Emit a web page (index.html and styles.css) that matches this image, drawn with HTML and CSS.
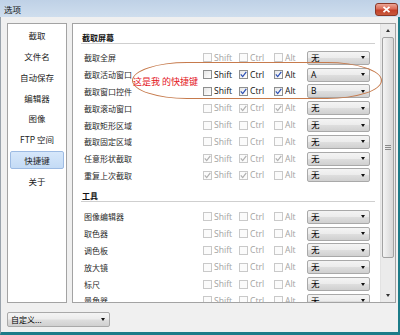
FILE: index.html
```
<!DOCTYPE html>
<html lang="zh-CN">
<head>
<meta charset="utf-8">
<title>选项</title>
<link rel="stylesheet" href="styles.css">
</head>
<body>
<div class="window">
  <div class="titlebar">
    <span class="title">选项</span>
    <div class="close"><svg width="9" height="7" viewBox="0 0 9 7"><path d="M1.5 0.8 L7.5 6.2 M7.5 0.8 L1.5 6.2" stroke="#fff" stroke-width="1.8" fill="none"/></svg></div>
  </div>
  <div class="body">
    <div class="main">
      <nav class="nav">
        <div class="nav-item">截取</div>
        <div class="nav-item">文件名</div>
        <div class="nav-item">自动保存</div>
        <div class="nav-item">编辑器</div>
        <div class="nav-item">图像</div>
        <div class="nav-item">FTP 空间</div>
        <div class="nav-item active">快捷键</div>
        <div class="nav-item">关于</div>
      </nav>
      <div class="content">
        <div class="scroll-area">
          <div class="section-title">截取屏幕</div>
          <div class="rows">
            <div class="row">
              <span class="label">截取全屏</span>
              <span class="key shift off"><i class="box"></i>Shift</span>
              <span class="key ctrl off"><i class="box"></i>Ctrl</span>
              <span class="key alt off"><i class="box"></i>Alt</span>
              <span class="select"><span class="val">无</span><i class="arrow"></i></span>
            </div>
            <div class="row">
              <span class="label">截取活动窗口</span>
              <span class="key shift"><i class="box"></i>Shift</span>
              <span class="key ctrl"><i class="box"><svg viewBox="0 0 9 9"><path d="M1.8 4.4 L3.7 6.6 L7.3 1.9"/></svg></i>Ctrl</span>
              <span class="key alt"><i class="box"><svg viewBox="0 0 9 9"><path d="M1.8 4.4 L3.7 6.6 L7.3 1.9"/></svg></i>Alt</span>
              <span class="select"><span class="val">A</span><i class="arrow"></i></span>
            </div>
            <div class="row">
              <span class="label">截取窗口控件</span>
              <span class="key shift"><i class="box"></i>Shift</span>
              <span class="key ctrl"><i class="box"><svg viewBox="0 0 9 9"><path d="M1.8 4.4 L3.7 6.6 L7.3 1.9"/></svg></i>Ctrl</span>
              <span class="key alt"><i class="box"><svg viewBox="0 0 9 9"><path d="M1.8 4.4 L3.7 6.6 L7.3 1.9"/></svg></i>Alt</span>
              <span class="select"><span class="val">B</span><i class="arrow"></i></span>
            </div>
            <div class="row">
              <span class="label">截取滚动窗口</span>
              <span class="key shift off"><i class="box"></i>Shift</span>
              <span class="key ctrl off"><i class="box"><svg viewBox="0 0 9 9"><path d="M1.8 4.4 L3.7 6.6 L7.3 1.9"/></svg></i>Ctrl</span>
              <span class="key alt off"><i class="box"><svg viewBox="0 0 9 9"><path d="M1.8 4.4 L3.7 6.6 L7.3 1.9"/></svg></i>Alt</span>
              <span class="select"><span class="val">无</span><i class="arrow"></i></span>
            </div>
            <div class="row">
              <span class="label">截取矩形区域</span>
              <span class="key shift off"><i class="box"></i>Shift</span>
              <span class="key ctrl off"><i class="box"></i>Ctrl</span>
              <span class="key alt off"><i class="box"></i>Alt</span>
              <span class="select"><span class="val">无</span><i class="arrow"></i></span>
            </div>
            <div class="row">
              <span class="label">截取固定区域</span>
              <span class="key shift off"><i class="box"></i>Shift</span>
              <span class="key ctrl off"><i class="box"></i>Ctrl</span>
              <span class="key alt off"><i class="box"></i>Alt</span>
              <span class="select"><span class="val">无</span><i class="arrow"></i></span>
            </div>
            <div class="row">
              <span class="label">任意形状截取</span>
              <span class="key shift off"><i class="box"><svg viewBox="0 0 9 9"><path d="M1.8 4.4 L3.7 6.6 L7.3 1.9"/></svg></i>Shift</span>
              <span class="key ctrl off"><i class="box"><svg viewBox="0 0 9 9"><path d="M1.8 4.4 L3.7 6.6 L7.3 1.9"/></svg></i>Ctrl</span>
              <span class="key alt off"><i class="box"><svg viewBox="0 0 9 9"><path d="M1.8 4.4 L3.7 6.6 L7.3 1.9"/></svg></i>Alt</span>
              <span class="select"><span class="val">无</span><i class="arrow"></i></span>
            </div>
            <div class="row">
              <span class="label">重复上次截取</span>
              <span class="key shift off"><i class="box"><svg viewBox="0 0 9 9"><path d="M1.8 4.4 L3.7 6.6 L7.3 1.9"/></svg></i>Shift</span>
              <span class="key ctrl off"><i class="box"><svg viewBox="0 0 9 9"><path d="M1.8 4.4 L3.7 6.6 L7.3 1.9"/></svg></i>Ctrl</span>
              <span class="key alt off"><i class="box"></i>Alt</span>
              <span class="select"><span class="val">无</span><i class="arrow"></i></span>
            </div>
          </div>
          <div class="section-title second">工具</div>
          <div class="rows tools">
            <div class="row">
              <span class="label">图像编辑器</span>
              <span class="key shift off"><i class="box"></i>Shift</span>
              <span class="key ctrl off"><i class="box"></i>Ctrl</span>
              <span class="key alt off"><i class="box"></i>Alt</span>
              <span class="select"><span class="val">无</span><i class="arrow"></i></span>
            </div>
            <div class="row">
              <span class="label">取色器</span>
              <span class="key shift off"><i class="box"></i>Shift</span>
              <span class="key ctrl off"><i class="box"></i>Ctrl</span>
              <span class="key alt off"><i class="box"></i>Alt</span>
              <span class="select"><span class="val">无</span><i class="arrow"></i></span>
            </div>
            <div class="row">
              <span class="label">调色板</span>
              <span class="key shift off"><i class="box"></i>Shift</span>
              <span class="key ctrl off"><i class="box"></i>Ctrl</span>
              <span class="key alt off"><i class="box"></i>Alt</span>
              <span class="select"><span class="val">无</span><i class="arrow"></i></span>
            </div>
            <div class="row">
              <span class="label">放大镜</span>
              <span class="key shift off"><i class="box"></i>Shift</span>
              <span class="key ctrl off"><i class="box"></i>Ctrl</span>
              <span class="key alt off"><i class="box"></i>Alt</span>
              <span class="select"><span class="val">无</span><i class="arrow"></i></span>
            </div>
            <div class="row">
              <span class="label">标尺</span>
              <span class="key shift off"><i class="box"></i>Shift</span>
              <span class="key ctrl off"><i class="box"></i>Ctrl</span>
              <span class="key alt off"><i class="box"></i>Alt</span>
              <span class="select"><span class="val">无</span><i class="arrow"></i></span>
            </div>
            <div class="row">
              <span class="label">量角器</span>
              <span class="key shift off"><i class="box"></i>Shift</span>
              <span class="key ctrl off"><i class="box"></i>Ctrl</span>
              <span class="key alt off"><i class="box"></i>Alt</span>
              <span class="select"><span class="val">无</span><i class="arrow"></i></span>
            </div>
          </div>
        </div>
        <div class="scrollbar">
          <div class="sb-btn"><i class="sb-up"></i></div>
          <div class="sb-thumb"><i class="grip"></i><i class="grip"></i><i class="grip"></i></div>
          <div class="sb-track"></div>
          <div class="sb-btn"><i class="sb-down"></i></div>
        </div>
      </div>
    </div>
    <div class="footer">
      <div class="select footer-select"><span class="val">自定义...</span><i class="arrow"></i></div>
    </div>
  </div>
  <div class="annotation">
    <div class="ellipse"></div>
    <span class="note">这是我 的快捷键</span>
  </div>
</div>
</body>
</html>
```

FILE: styles.css
```
* { box-sizing: border-box; }
html, body {
  margin: 0;
  padding: 0;
  width: 400px;
  height: 335px;
  overflow: hidden;
  background: #f0f0f0;
}
.window {
  position: relative;
  width: 400px;
  height: 335px;
  font-family: "Open Sans", "Noto Sans CJK SC", sans-serif;
  font-size: 8px;
  color: #222;
  background: #f0f0f0;
}
.titlebar {
  position: relative;
  height: 17px;
  background: linear-gradient(#bfd1e6, #cfdeee);
  display: flex;
  align-items: center;
  padding-left: 4px;
}
.title {
  font-family: "Noto Sans CJK SC", sans-serif;
  font-size: 8.5px;
  color: #111;
  line-height: 12px;
}
.close {
  position: absolute;
  left: 375px;
  top: 3px;
  width: 23px;
  height: 13px;
  border: 1px solid #8a3727;
  border-radius: 3px;
  background: linear-gradient(#eba596 0%, #db6a55 45%, #c4412b 55%, #c85a3d 100%);
  display: flex;
  align-items: center;
  justify-content: center;
}
.close svg { display: block; }

.body {
  height: 318px;
  border-left: 1px solid #9aa3ac;
  border-right: 2px solid #1d7b88;
  border-bottom: 3px solid #1d7b88;
  display: flex;
  flex-direction: column;
}
.main {
  height: 286px;
  padding: 6px 2px 0 6px;
  display: flex;
  gap: 5px;
}
.nav {
  width: 60px;
  height: 280px;
  background: #fff;
  border: 1px solid #a3a3a3;
  padding: 2px 2px 0;
}
.nav-item {
  height: 18px;
  margin-bottom: 2.86px;
  display: flex;
  align-items: center;
  justify-content: center;
  font-family: "Noto Sans CJK SC", sans-serif;
  font-size: 8.5px;
  color: #222;
  border: 1px solid transparent;
  border-radius: 2px;
}
.nav-item.active {
  background: linear-gradient(#d6e7fa, #c4dbf5);
  border-color: #9dbbe3;
}
.content {
  width: 324px;
  height: 280px;
  background: #fff;
  border: 1px solid #a3a3a3;
  display: flex;
}
.scroll-area {
  width: 307px;
  height: 278px;
  overflow: hidden;
  padding-left: 8px;
}
.section-title {
  margin-top: 8px;
  margin-right: 5px;
  height: 12px;
  line-height: 11px;
  border-bottom: 1px solid #cfcfcf;
  font-family: "Noto Sans CJK SC", sans-serif;
  font-weight: 700;
  font-size: 8px;
  color: #111;
  padding-left: 1px;
}
.section-title.second { margin-top: 6.6px; }
.rows { padding: 5.5px 0 0 3px; }
.rows.tools { padding-top: 6px; }
.row {
  height: 16.8px;
  display: flex;
  align-items: center;
}
.label {
  width: 119px;
  font-family: "Noto Sans CJK SC", sans-serif;
  font-size: 8px;
  color: #2a2a2a;
  white-space: nowrap;
}
.key {
  display: flex;
  align-items: center;
  font-size: 8.6px;
  color: #111;
  line-height: 10px;
}
.key.shift { width: 36px; }
.key.ctrl { width: 35px; }
.key.alt { width: 33px; }
.key.off { color: #a2a2a2; }
.box {
  width: 9px;
  height: 9px;
  margin-right: 2px;
  border: 1px solid #8e8f8f;
  background: linear-gradient(135deg, #e6e6e6, #ffffff);
  display: block;
  position: relative;
  flex: none;
}
.key.off .box {
  border-color: #c9c9c9;
  background: #fbfbfb;
}
.box svg {
  position: absolute;
  left: -1px;
  top: -1px;
  width: 9px;
  height: 9px;
}
.box svg path {
  fill: none;
  stroke: #2b4fb5;
  stroke-width: 1.2;
}
.key.off .box svg path { stroke: #b0b0b0; }

.select {
  width: 63px;
  height: 14px;
  border: 1px solid #a9a9a9;
  border-radius: 2px;
  background: linear-gradient(#f4f4f4 0%, #ececec 48%, #dedede 52%, #d0d0d0 100%);
  display: flex;
  align-items: center;
  padding-left: 3px;
}
.val {
  font-family: "Open Sans", "Noto Sans CJK SC", sans-serif;
  font-size: 8.5px;
  color: #000;
  line-height: 10px;
}
.arrow {
  margin-left: auto;
  margin-right: 4px;
  width: 0;
  height: 0;
  border-left: 2.5px solid transparent;
  border-right: 2.5px solid transparent;
  border-top: 3px solid #111;
}
.scrollbar {
  width: 15px;
  height: 278px;
  background: #ebebeb;
  border-left: 1px solid #e2e2e2;
  display: flex;
  flex-direction: column;
  align-items: center;
}
.sb-btn {
  height: 13px;
  width: 100%;
  display: flex;
  align-items: center;
  justify-content: center;
}
.sb-up {
  width: 0; height: 0;
  border-left: 2.5px solid transparent;
  border-right: 2.5px solid transparent;
  border-bottom: 3px solid #333;
}
.sb-down {
  width: 0; height: 0;
  border-left: 2.5px solid transparent;
  border-right: 2.5px solid transparent;
  border-top: 3px solid #333;
}
.sb-thumb {
  width: 12px;
  height: 221px;
  border: 1px solid #a2a2a2;
  border-radius: 2px;
  background: linear-gradient(90deg, #f4f4f4, #e2e2e2 60%, #d6d6d6);
  display: flex;
  flex-direction: column;
  align-items: center;
  justify-content: center;
  gap: 1px;
}
.grip {
  display: block;
  width: 6px;
  height: 1px;
  background: #8a8a8a;
}
.sb-track { flex: 1; }

.footer {
  height: 29px;
  padding: 9px 0 0 6px;
}
.footer-select {
  width: 103px;
  height: 15px;
}
.footer-select .val {
  font-family: "Noto Sans CJK SC", sans-serif;
  font-size: 8px;
}

.annotation {
  position: absolute;
  left: 132px;
  top: 62px;
  width: 250px;
  height: 37px;
}
.ellipse {
  position: absolute;
  inset: 0;
  border: 1.4px solid #c67a4c;
  border-radius: 55px / 18.5px;
}
.note {
  position: absolute;
  left: 1px;
  top: 14px;
  font-family: "Noto Sans CJK SC", serif;
  font-size: 9px;
  line-height: 11px;
  color: #e3141c;
  white-space: nowrap;
}
```
